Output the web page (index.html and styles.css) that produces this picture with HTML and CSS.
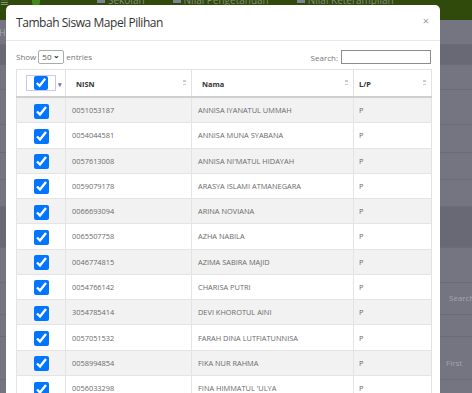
FILE: index.html
```html
<!DOCTYPE html>
<html lang="id">
<head>
  <meta charset="UTF-8" />
  <title>Tambah Siswa Mapel Pilihan</title>
  <link rel="stylesheet" href="styles.css">
</head>
<body>

  <div class="page">
    <div class="topbar">
      <span class="burger">&#8801;</span>
      <span class="dot"></span>
      <span class="nav-item"><i class="ico"></i>Sekolah</span>
      <span class="nav-item"><i class="ico"></i>Nilai Pengetahuan</span>
      <span class="nav-item"><i class="ico"></i>Nilai Keterampilan</span>
    </div>
    <div class="band"><span class="crumb">Home</span></div>
    <div class="band dark h20"></div>
    <div class="band h25"></div>
    <div class="band h35"></div>
    <div class="band h28"></div>
    <div class="band h27"></div>
    <div class="band h27"></div>
    <div class="band dark h41"></div>
    <div class="band h35"></div>
    <div class="band h32 side-text">Search</div>
    <div class="band h22"></div>
    <div class="band h43 side-text first">First</div>
    <div class="band h20"></div>
  </div>

  <div class="modal">
    <div class="modal-header">
      <h4 class="modal-title">Tambah Siswa Mapel Pilihan</h4>
      <span class="close">&times;</span>
    </div>

    <div class="modal-body">
      <div class="controls">
        <label class="length">Show
          <span class="select">50 <b>&#8964;</b></span>
          entries</label>
        <label class="search">Search: <span class="search-box"></span></label>
      </div>

      <table class="tbl">
        <colgroup>
          <col class="c-check">
          <col class="c-nisn">
          <col class="c-nama">
          <col class="c-lp">
        </colgroup>
        <thead>
          <tr>
            <th class="check-head">
              <span class="multi"><input type="checkbox" checked></span><span class="caret">&#9662;</span>
            </th>
            <th>NISN <span class="sort"></span></th>
            <th>Nama <span class="sort"></span></th>
            <th class="lp">L/P <span class="sort"></span></th>
          </tr>
        </thead>
        <tbody id="rows"></tbody>
      </table>
    </div>
  </div>

  <script>
    const siswa = [
      ["0051053187", "ANNISA IYANATUL UMMAH"],
      ["0054044581", "ANNISA MUNA SYABANA"],
      ["0057613008", "ANNISA NI'MATUL HIDAYAH"],
      ["0059079178", "ARASYA ISLAMI ATMANEGARA"],
      ["0066693094", "ARINA NOVIANA"],
      ["0065507758", "AZHA NABILA"],
      ["0046774815", "AZIMA SABIRA MAJID"],
      ["0054766142", "CHARISA PUTRI"],
      ["3054785414", "DEVI KHOROTUL AINI"],
      ["0057051532", "FARAH DINA LUTFIATUNNISA"],
      ["0058994854", "FIKA NUR RAHMA"],
      ["0056033298", "FINA HIMMATUL 'ULYA"],
      ["0055120447", "HANIFA ZAHRA"]
    ];
    document.getElementById("rows").innerHTML = siswa.map(s => `
      <tr>
        <td class="check"><input type="checkbox" checked></td>
        <td>${s[0]}</td>
        <td>${s[1]}</td>
        <td class="lp">P</td>
      </tr>`).join("");
  </script>

</body>
</html>
```

FILE: styles.css
```css
body {
  margin: 0;
  padding: 0;
  font-family: 'Open Sans', 'Liberation Sans', sans-serif;
  background: #757582;
  overflow: hidden;
  height: 393px;
}

/* page behind the modal (already dimmed) */
.page {
  width: 100%;
}

.topbar {
  height: 20px;
  background: #2f4a0b;
  display: flex;
  align-items: flex-start;
  overflow: hidden;
}

.burger {
  color: #8a917e;
  font-size: 14px;
  line-height: 10px;
  margin: -3px 0 0 0;
  width: 30px;
}

.dot {
  width: 8px;
  height: 6px;
  background: #3f8a19;
  margin: 0 57px 0 2px;
  border-radius: 0 0 4px 4px;
}

.nav-item {
  color: #858c7c;
  font-size: 10px;
  line-height: 10px;
  margin-top: -5px;
  margin-right: 28px;
  display: flex;
  gap: 3px;
}

.ico {
  width: 8px;
  height: 8px;
  background: #7c8292;
}

.band {
  border-bottom: 1px solid #6c6c78;
  box-sizing: border-box;
  height: 25px;
}

.crumb {
  display: inline-block;
  width: 6px;
  overflow: hidden;
  color: #a8a8b0;
  font-size: 9px;
  line-height: 25px;
  margin-left: -1px;
  vertical-align: top;
}

.dark { background: #696975; }
.h20 { height: 20px; }
.h22 { height: 22px; }
.h25 { height: 25px; }
.h27 { height: 27px; }
.h28 { height: 28px; }
.h32 { height: 32px; }
.h35 { height: 35px; }
.h41 { height: 41px; }
.h43 { height: 43px; }

.side-text {
  color: #a3a3ab;
  font-size: 8px;
  padding-left: 449px;
  line-height: 30px;
}

.first {
  padding-left: 446px;
  line-height: 52px;
}

/* modal */
.modal {
  position: absolute;
  left: 6px;
  top: 5px;
  width: 434px;
  height: 430px;
  background: #fff;
  border-radius: 5px;
  overflow: hidden;
}

.modal-header {
  height: 35px;
  padding: 0 11px 0 10px;
  display: flex;
  align-items: center;
  justify-content: space-between;
  border-bottom: 1px solid #e9e9e9;
}

.modal-title {
  margin: 0;
  font-size: 12px;
  font-weight: normal;
  color: #333;
  letter-spacing: -0.45px;
}

.close {
  color: #9a9a9a;
  font-size: 11px;
  margin-top: -4px;
}

.modal-body {
  padding: 8px 9px 0 10px;
}

.controls {
  display: flex;
  justify-content: space-between;
  align-items: center;
  height: 15px;
  font-size: 8px;
  color: #777;
  margin-bottom: 5px;
}

.length {
  display: flex;
  align-items: center;
  gap: 2px;
}

.select {
  display: inline-flex;
  justify-content: space-between;
  align-items: center;
  width: 26px;
  height: 14px;
  box-sizing: border-box;
  border: 1px solid #aaa;
  border-radius: 2px;
  padding: 0 3px;
  color: #555;
}

.select b {
  font-size: 8px;
  line-height: 4px;
  margin-top: -4px;
  color: #333;
}

.search {
  display: flex;
  align-items: center;
  gap: 3px;
  margin-top: 1px;
}

.search-box {
  display: inline-block;
  width: 90px;
  height: 14px;
  box-sizing: border-box;
  border: 1px solid #8c8c8c;
}

/* table */
.tbl {
  width: 415px;
  border-collapse: collapse;
  table-layout: fixed;
  font-size: 7.4px;
  color: #6a6a6a;
  border: 1px solid #e2e2e2;
}

.c-check { width: 49px; }
.c-nisn { width: 126px; }
.c-nama { width: 162px; }
.c-lp { width: 78px; }

.tbl th {
  position: relative;
  height: 24px;
  text-align: left;
  font-weight: bold;
  color: #333;
  padding: 2px 0 0 10px;
  border-left: 1px solid #e2e2e2;
  border-bottom: 2px solid #cfcfcf;
}

.tbl th.lp {
  padding-left: 5px;
}

.sort {
  position: absolute;
  right: 5px;
  top: 9px;
  width: 3px;
  height: 8px;
  background:
    linear-gradient(to top, #ccc 50%, transparent 50%) top / 3px 3px no-repeat,
    linear-gradient(to bottom, #ccc 50%, transparent 50%) bottom / 3px 3px no-repeat;
}

.check-head {
  padding: 0 !important;
  text-align: center !important;
}

.multi {
  display: inline-flex;
  justify-content: center;
  align-items: center;
  width: 30px;
  height: 16px;
  box-sizing: border-box;
  border: 1px solid #c9c6f2;
  margin-left: -1px;
}

.multi input {
  margin: 0;
  width: 14px;
  height: 14px;
}

.caret {
  position: absolute;
  left: 41px;
  top: 10px;
  color: #7575b5;
  font-size: 7px;
}

.tbl td {
  height: 24.27px;
  padding: 0 0 0 6px;
  border-top: 1px solid #e4e4e4;
  border-left: 1px solid #e4e4e4;
  white-space: nowrap;
  overflow: hidden;
}

.tbl td.lp {
  padding-left: 5px;
}

.tbl tbody tr:nth-child(odd) td {
  background: #f2f2f2;
}

.tbl tbody tr:first-child td {
  border-top: none;
}

.tbl td.check {
  padding: 0;
  text-align: center;
}

.check input {
  margin: 2px 0 0 0;
  width: 15px;
  height: 15px;
  vertical-align: middle;
}
```
